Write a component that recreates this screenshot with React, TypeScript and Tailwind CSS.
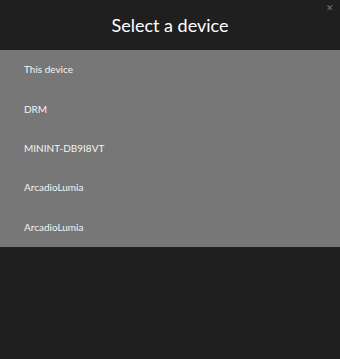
import React from 'react';

const devices = ['This device', 'DRM', 'MININT-DB9I8VT', 'ArcadioLumia', 'ArcadioLumia'];

export default function App() {
  return (
    <div
      className="w-[340px] h-[359px] bg-[#1f1f1f] flex flex-col relative"
      style={{ fontFamily: 'Lato, "Open Sans", sans-serif' }}
    >
      <button className="absolute top-[3px] right-[6px] text-[9px] leading-none text-[#777]">✕</button>
      <div className="h-[50px] flex items-center justify-center">
        <h1 className="text-[18px] text-white">Select a device</h1>
      </div>
      <ul className="bg-[#777777]">
        {devices.map((d, i) => (
          <li key={i} className="h-[39.4px] flex items-center pl-[24px] text-[10px] text-[#f4f4f4]">
            {d}
          </li>
        ))}
      </ul>
    </div>
  );
}
